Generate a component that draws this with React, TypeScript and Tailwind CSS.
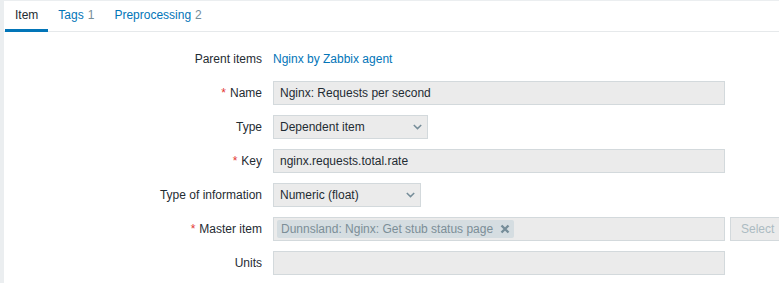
import React from 'react';

type Row = {
  label: string
  required?: boolean
}

function Label({ label, required }: Row) {
  return (
    <div className="flex h-6 items-center justify-end text-right">
      {required && <span className="mr-[4px] text-[#e33734]">*</span>}
      <span>{label}</span>
    </div>
  );
}

function Chevron() {
  return (
    <svg width="9" height="6" viewBox="0 0 9 6" className="shrink-0">
      <path d="M0.8 1 L4.5 4.6 L8.2 1" fill="none" stroke="#768d99" strokeWidth="1.5" />
    </svg>
  );
}

function TextBox({ value, w }: { value?: string; w: string }) {
  return (
    <div className={`flex h-6 items-center border border-[#d3d9dc] bg-[#ebebeb] px-[6px] ${w}`}>
      {value}
    </div>
  );
}

function SelectBox({ value, w }: { value: string; w: string }) {
  return (
    <div className={`flex h-6 items-center justify-between border border-[#d3d9dc] bg-[#ebebeb] pl-[6px] pr-[5px] ${w}`}>
      <span>{value}</span>
      <Chevron />
    </div>
  );
}

export default function App() {
  return (
    <main
      className="h-[283px] w-[779px] overflow-hidden bg-[#ebeef0] text-[12px] text-[#1f2c33]"
      style={{ fontFamily: '"Liberation Sans", Arial, sans-serif' }}
    >
      <div className="ml-[4px] mt-px h-full bg-white">
        <div className="flex h-[31px] border-b border-[#e6e9eb] pl-px">
          <div className="relative flex items-center px-[10px] pb-[2px]">
            Item
            <span className="absolute bottom-[-1px] left-0 right-0 h-[3px] bg-[#0275b8]"></span>
          </div>
          <div className="flex items-center px-[10px] pb-[2px] text-[#0275b8]">
            Tags<span className="ml-[4px] text-[#768d99]">1</span>
          </div>
          <div className="flex items-center px-[10px] pb-[2px] text-[#0275b8]">
            Preprocessing<span className="ml-[4px] text-[#768d99]">2</span>
          </div>
        </div>

        <div className="mt-[15px] grid grid-cols-[258px_auto] gap-x-[11px] gap-y-[10px]">
          <Label label="Parent items" />
          <div className="flex h-6 items-center text-[#0275b8]">Nginx by Zabbix agent</div>

          <Label label="Name" required />
          <TextBox value="Nginx: Requests per second" w="w-[452px]" />

          <Label label="Type" />
          <SelectBox value="Dependent item" w="w-[155px]" />

          <Label label="Key" required />
          <TextBox value="nginx.requests.total.rate" w="w-[452px]" />

          <Label label="Type of information" />
          <SelectBox value="Numeric (float)" w="w-[148px]" />

          <Label label="Master item" required />
          <div className="flex items-center gap-[5px]">
            <div className="flex h-6 w-[452px] items-center border border-[#d3d9dc] bg-[#ebebeb] px-[3px]">
              <div className="flex h-[18px] items-center gap-[7px] rounded-[2px] bg-[#d5dde1] pl-[4px] pr-[4px] text-[#7c8e97]">
                <span>Dunnsland: Nginx: Get stub status page</span>
                <svg width="10" height="10" viewBox="0 0 10 10">
                  <path d="M1.5 1.5 L8.5 8.5 M8.5 1.5 L1.5 8.5" stroke="#768d99" strokeWidth="2.4" />
                </svg>
              </div>
            </div>
            <div className="flex h-6 w-[60px] shrink-0 items-center border border-[#d3d9dc] bg-[#ebebeb] px-[10px] text-[#acbbc2]">
              Select
            </div>
          </div>

          <Label label="Units" />
          <TextBox w="w-[452px]" />
        </div>
      </div>
    </main>
  );
}
